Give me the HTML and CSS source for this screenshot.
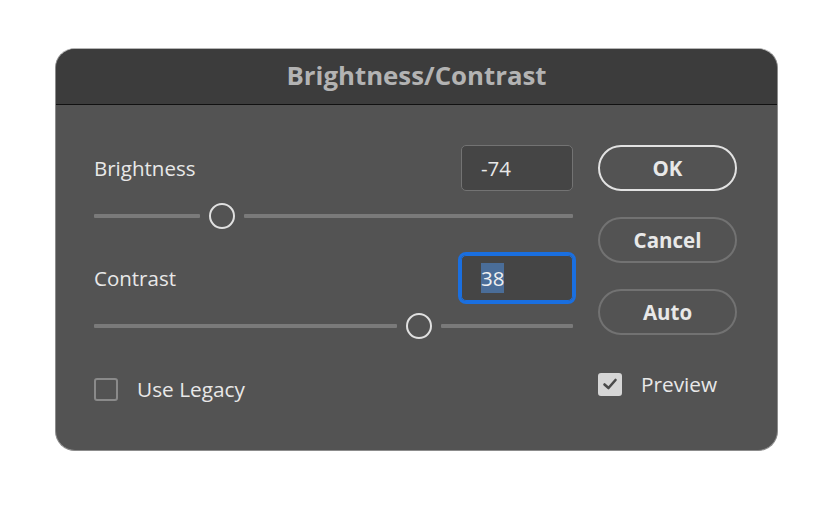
FILE: index.html
```html
<!DOCTYPE html>
<html>
<head>
<meta charset="utf-8">
<link rel="stylesheet" href="styles.css">
</head>
<body>
<div class="dialog">
  <div class="titlebar">Brightness/Contrast</div>
  <div class="content">
    <div class="left">
      <div class="field">
        <span class="label">Brightness</span>
        <div class="input"><span>-74</span></div>
      </div>
      <div class="slider">
        <span class="seg" style="width:106px"></span>
        <span class="thumb"></span>
        <span class="seg grow"></span>
      </div>
      <div class="field field2">
        <span class="label">Contrast</span>
        <div class="input focus"><span class="sel">38</span></div>
      </div>
      <div class="slider">
        <span class="seg" style="width:303px"></span>
        <span class="thumb"></span>
        <span class="seg grow"></span>
      </div>
      <label class="check legacy"><span class="box"></span><span class="ctext">Use Legacy</span></label>
    </div>
    <div class="right">
      <div class="btn primary">OK</div>
      <div class="btn">Cancel</div>
      <div class="btn">Auto</div>
      <label class="check preview"><span class="box on"><svg width="16" height="14" viewBox="0 0 16 14"><path d="M2.5 7.5 L6.5 11 L13.5 3" fill="none" stroke="#4a4a4a" stroke-width="2.6" stroke-linecap="round" stroke-linejoin="round"/></svg></span><span class="ctext">Preview</span></label>
    </div>
  </div>
</div>
</body>
</html>
```

FILE: styles.css
```css
html, body {
  margin: 0;
  padding: 0;
  background: #ffffff;
}
body {
  width: 840px;
  height: 516px;
  padding: 48px 0 0 55px;
  box-sizing: border-box;
  font-family: "Open Sans", "Noto Sans", sans-serif;
}
.dialog {
  width: 723px;
  height: 403px;
  box-sizing: border-box;
  background: #535353;
  border-radius: 20px;
  border: 1px solid #8c8c8c;
  border-top-color: #b4b4b4;
  overflow: hidden;
  display: flex;
  flex-direction: column;
}
.titlebar {
  height: 56px;
  flex: none;
  box-sizing: border-box;
  padding-bottom: 3px;
  background: #3c3c3c;
  border-bottom: 1px solid #111111;
  color: #b3b3b3;
  font-weight: 700;
  font-size: 25.8px;
  display: flex;
  align-items: center;
  justify-content: center;
}
.content {
  display: flex;
  padding: 40px 39px 0 38px;
  gap: 23px;
}
.left {
  width: 481px;
  display: flex;
  flex-direction: column;
}
.field {
  height: 46px;
  display: flex;
  align-items: center;
  justify-content: space-between;
}
.field2 {
  margin-top: 26px;
}
.label {
  color: #e8e8e8;
  font-size: 20.5px;
  font-weight: 500;
}
.input {
  width: 112px;
  height: 46px;
  box-sizing: border-box;
  border: 1.5px solid #737373;
  border-radius: 5px;
  background: #454545;
  color: #e8e8e8;
  font-size: 20.5px;
  font-weight: 500;
  display: flex;
  align-items: center;
  padding-left: 19px;
  margin-right: 2px;
}
.input.focus {
  outline: 3px solid #1a6fe0;
  outline-offset: 0;
  border-color: #1a6fe0;
}
.sel {
  background: #4a6d98;
  color: #f0f0f0;
  line-height: 30px;
}
.slider {
  margin-top: 12px;
  height: 26px;
  display: flex;
  align-items: center;
  gap: 9px;
  padding-right: 2px;
}
.seg {
  height: 4px;
  background: #7a7a7a;
  border-radius: 1px;
  flex: none;
}
.seg.grow {
  flex: 1;
}
.thumb {
  width: 26px;
  height: 26px;
  box-sizing: border-box;
  border: 2px solid #e0e0e0;
  border-radius: 50%;
  flex: none;
}
.check {
  display: flex;
  align-items: center;
  gap: 19px;
  color: #e8e8e8;
  font-size: 20.8px;
  font-weight: 500;
}
.legacy {
  margin-top: 38px;
  height: 24px;
}
.box {
  width: 24px;
  height: 23px;
  box-sizing: border-box;
  border: 2px solid #8a8a8a;
  border-radius: 3px;
  flex: none;
  display: flex;
  align-items: center;
  justify-content: center;
}
.box.on {
  background: #d6d6d6;
  border-color: #d6d6d6;
}
.right {
  width: 139px;
  display: flex;
  flex-direction: column;
}
.btn {
  height: 46px;
  box-sizing: border-box;
  border: 2px solid #727272;
  border-radius: 23px;
  color: #e8e8e8;
  font-weight: 700;
  font-size: 20.5px;
  display: flex;
  align-items: center;
  justify-content: center;
  margin-bottom: 26px;
}
.btn.primary {
  border-color: #e2e2e2;
}
.preview {
  margin-top: 11px;
  height: 24px;
}
```
